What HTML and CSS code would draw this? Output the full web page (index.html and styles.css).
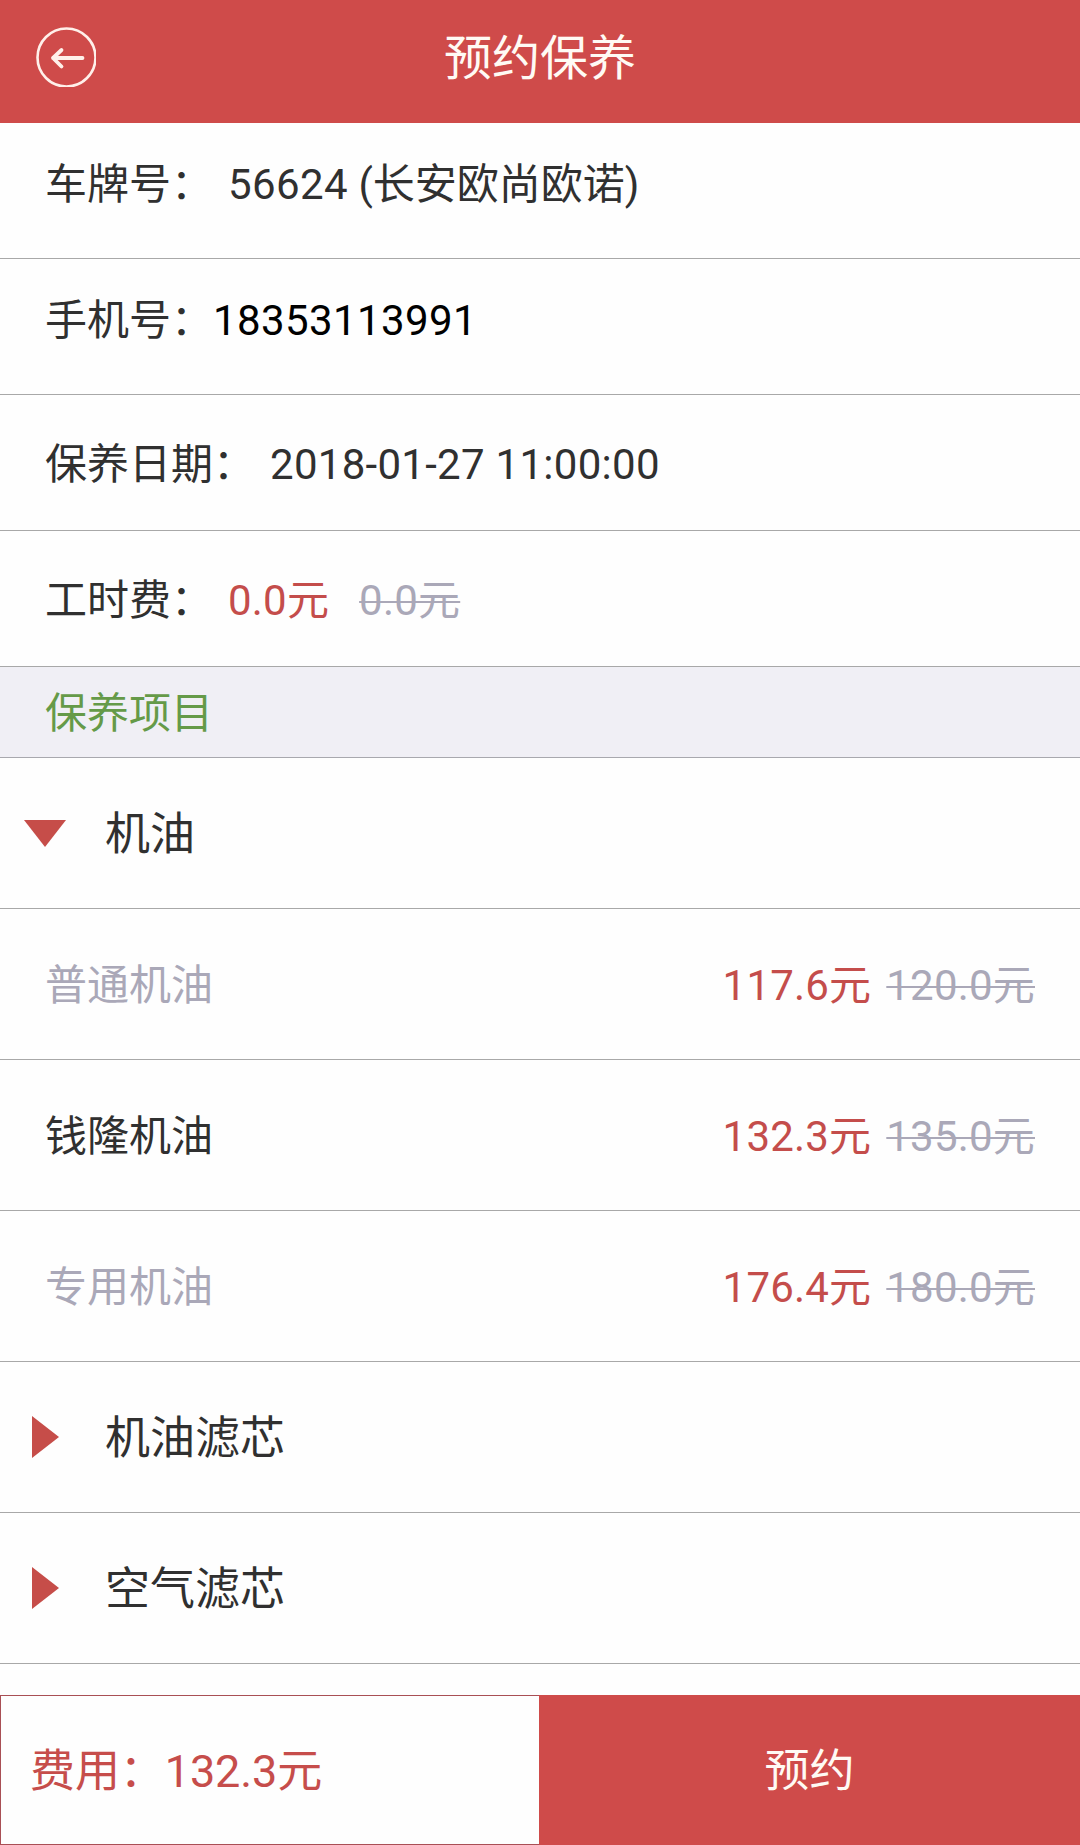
FILE: index.html
```
<!DOCTYPE html>
<html lang="zh-CN">
<head>
    <meta charset="UTF-8">
    <meta name="viewport" content="width=device-width, initial-scale=1.0">
    <title>预约保养</title>
    <link rel="stylesheet" href="styles.css">
</head>
<body>
    <header class="header">
        <a class="back" href="#">
            <svg width="60" height="60" viewBox="0 0 60 60" fill="none" stroke="#fff0ea" stroke-linecap="round" stroke-linejoin="round">
                <circle cx="30.5" cy="30.5" r="29" stroke-width="2.6"/>
                <path d="M46.5 31H17M25.5 23L17 31l8.500 8.500" stroke-width="3.800"/>
            </svg>
        </a>
        <h1>预约保养</h1>
    </header>

    <main class="content">
        <div class="row row-top">
            <span class="label">车牌号：</span>
            <span class="value"><span class="num">56624</span> (长安欧尚欧诺)</span>
        </div>
        <div class="row row-top">
            <span class="label">手机号：</span>
            <span class="phone num">18353113991</span>
        </div>
        <div class="row">
            <span class="label">保养日期：</span>
            <span class="value date">2018-01-27 11:00:00</span>
        </div>
        <div class="row">
            <span class="label">工时费：</span>
            <span class="value price">0.0元</span>
            <del class="hour-old">0.0元</del>
        </div>

        <h2 class="section">保养项目</h2>

        <div class="group">
            <span class="arrow"><svg width="42" height="27" viewBox="0 0 42 27"><path d="M0 0h42L21 27z"/></svg></span>
            <span class="title">机油</span>
        </div>
        <div class="item disabled">
            <span class="name">普通机油</span>
            <span class="price">117.6元</span>
            <del>120.0元</del>
        </div>
        <div class="item">
            <span class="name">钱隆机油</span>
            <span class="price">132.3元</span>
            <del>135.0元</del>
        </div>
        <div class="item disabled">
            <span class="name">专用机油</span>
            <span class="price">176.4元</span>
            <del>180.0元</del>
        </div>
        <div class="group">
            <span class="arrow"><svg width="27" height="42" viewBox="0 0 27 42"><path d="M0 0v42L27 21z"/></svg></span>
            <span class="title">机油滤芯</span>
        </div>
        <div class="group">
            <span class="arrow"><svg width="27" height="42" viewBox="0 0 27 42"><path d="M0 0v42L27 21z"/></svg></span>
            <span class="title">空气滤芯</span>
        </div>
    </main>

    <footer class="footer">
        <div class="total">费用：132.3元</div>
        <button class="submit">预约</button>
    </footer>
</body>
</html>
```

FILE: styles.css
```
* {
    box-sizing: border-box;
}
body {
    margin: 0;
    height: 1845px;
    display: flex;
    flex-direction: column;
    background: #fefefe;
    color: #303030;
    font-family: Roboto, "Noto Sans CJK SC", sans-serif;
    font-size: 42px;
    line-height: 60px;
}
.header {
    display: grid;
    grid-template-columns: 96px 1fr 96px;
    align-items: center;
    height: 123px;
    padding-bottom: 9px;
    background: #cf4b4a;
    color: #fffaf4;
}
.back {
    height: 60px;
    padding-left: 36px;
}
.back svg {
    display: block;
}
.header h1 {
    margin: 0;
    padding-top: 4px;
    font-size: 48px;
    font-weight: 400;
    text-align: center;
}
.content {
    flex: 1;
}
.row {
    display: flex;
    align-items: center;
    height: 136px;
    padding: 4px 45px 0;
    border-bottom: 1px solid #a8a8a8;
}
.row-top {
    padding-bottom: 16px;
}
.value {
    margin-left: 15px;
}
.num {
    letter-spacing: 0.4px;
}
.date {
    letter-spacing: 0.28px;
}
.phone {
    color: #000;
}
.price {
    color: #c44d4b;
}
.price, del {
    letter-spacing: 0.2px;
}
del {
    color: #aaa8b8;
    text-decoration-thickness: 2px;
}
.hour-old {
    margin-left: 30px;
}
.section {
    margin: 0;
    height: 91px;
    padding: 17px 45px 13px;
    border-bottom: 1px solid #a8a8ae;
    background: #f0eff5;
    color: #659a48;
    font-size: 42px;
    font-weight: 400;
}
.group {
    display: flex;
    align-items: center;
    height: 151px;
    padding-left: 24px;
    border-bottom: 1px solid #a8a8a8;
    font-size: 45px;
}
.arrow {
    display: flex;
    justify-content: center;
    width: 42px;
    margin-right: 39px;
    fill: #c64d49;
}
.title {
    padding-top: 4px;
}
.item {
    display: flex;
    align-items: center;
    gap: 15px;
    height: 151px;
    padding: 4px 45px 0;
    border-bottom: 1px solid #a8a8a8;
}
.name {
    flex: 1;
}
.disabled .name {
    color: #aaa8b8;
}
.footer {
    display: flex;
    height: 150px;
    font-size: 45px;
}
.total {
    display: flex;
    align-items: center;
    width: 539px;
    padding: 4px 0 0 29px;
    border: 1px solid #a94f55;
    border-right: none;
    color: #c64d4b;
    letter-spacing: -0.1px;
}
.submit {
    flex: 1;
    padding: 4px 0 0;
    border: none;
    background: #cf4b4a;
    color: #fffaf4;
    font: inherit;
}
```
